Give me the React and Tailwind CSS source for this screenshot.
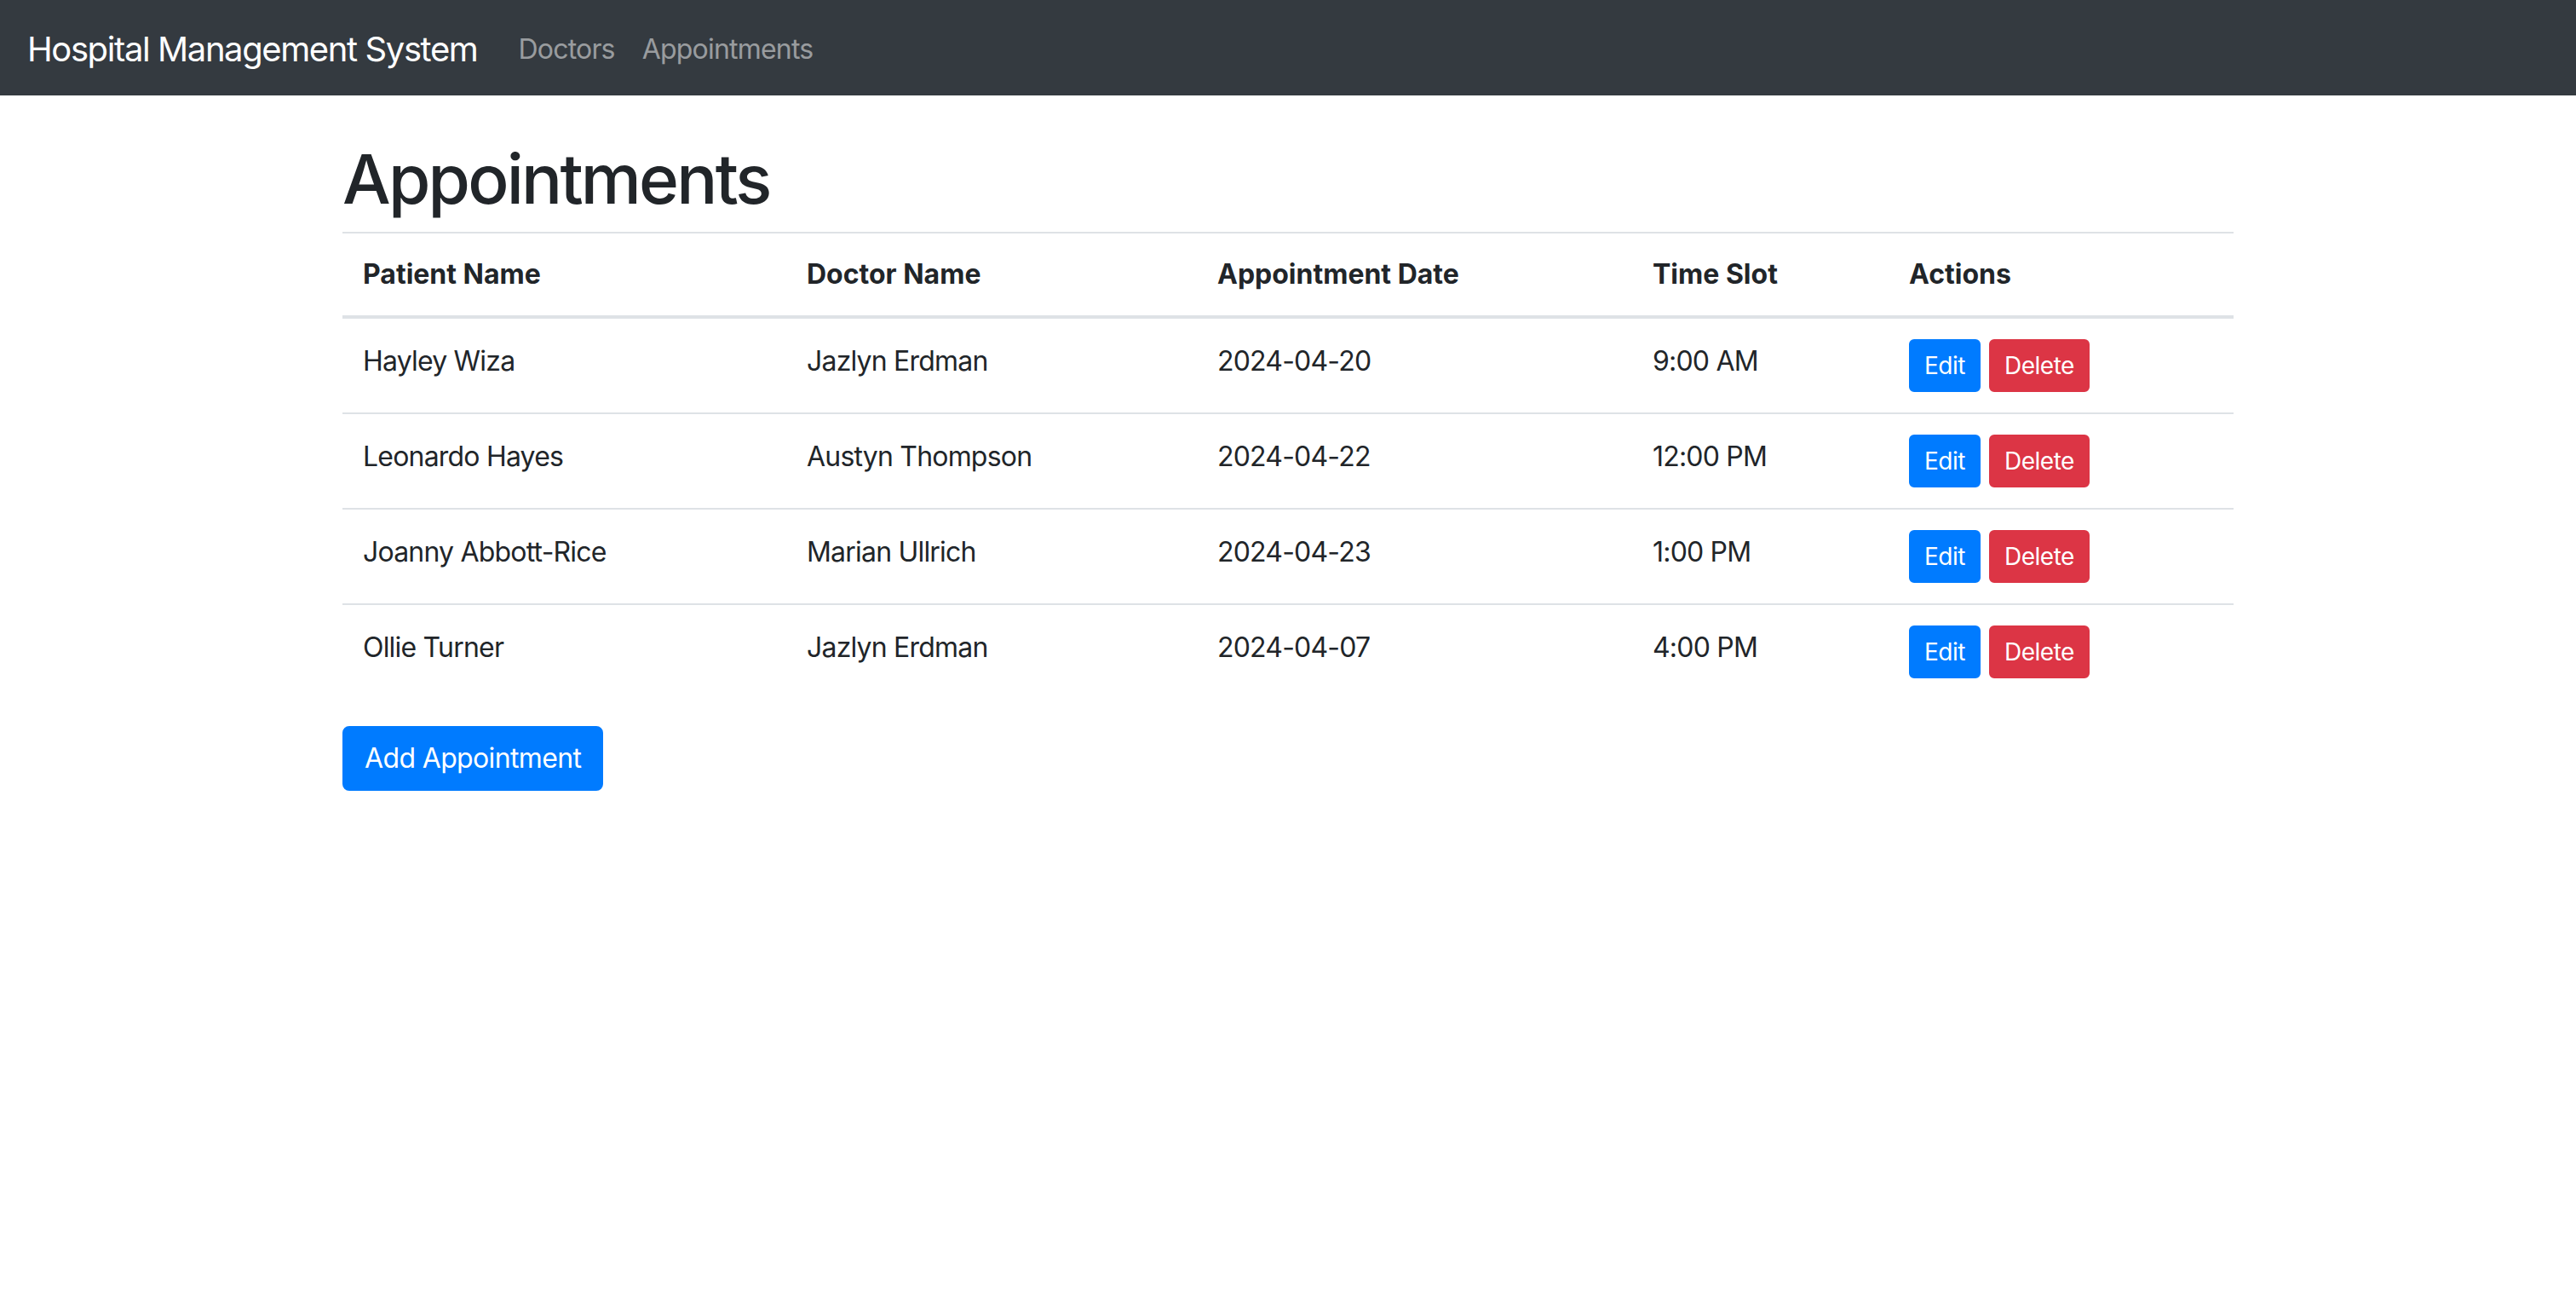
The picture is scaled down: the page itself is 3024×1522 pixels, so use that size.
import React from "react";

const appointments = [
  { patient: "Hayley Wiza", doctor: "Jazlyn Erdman", date: "2024-04-20", time: "9:00 AM" },
  { patient: "Leonardo Hayes", doctor: "Austyn Thompson", date: "2024-04-22", time: "12:00 PM" },
  { patient: "Joanny Abbott-Rice", doctor: "Marian Ullrich", date: "2024-04-23", time: "1:00 PM" },
  { patient: "Ollie Turner", doctor: "Jazlyn Erdman", date: "2024-04-07", time: "4:00 PM" },
];

const Navbar = () => (
  <nav className="flex items-center bg-[#343a40] px-[32px] pt-[18px] pb-[14px]">
    <a href="#" className="mr-[32px] py-[10px] text-[40px] leading-[60px] tracking-[-0.035em] text-white">
      Hospital Management System
    </a>
    <a href="#" className="px-[16px] py-[6px] text-[32px] leading-[48px] tracking-[-0.025em] text-white/50">
      Doctors
    </a>
    <a href="#" className="px-[16px] py-[6px] text-[32px] leading-[48px] tracking-[-0.025em] text-white/50">
      Appointments
    </a>
  </nav>
);

const App = () => {
  return (
    <div className="min-h-screen bg-white font-['Inter','Noto_Sans',sans-serif] text-[#212529]">
      <Navbar />
      <div className="mx-auto mt-[48px] w-[2280px] px-[30px]">
        <h1 className="mb-[16px] pt-[4px] text-[80px] font-medium leading-[92px] tracking-[-0.035em]">
          Appointments
        </h1>

        <table className="mb-[32px] w-full text-[32px] leading-[48px] tracking-[-0.025em]">
          <thead>
            <tr>
              <th className="w-[521px] border-t-2 border-b-4 border-[#dee2e6] p-[24px] text-left align-bottom font-bold tracking-normal">
                Patient Name
              </th>
              <th className="w-[482px] border-t-2 border-b-4 border-[#dee2e6] p-[24px] text-left align-bottom font-bold tracking-normal">
                Doctor Name
              </th>
              <th className="w-[511px] border-t-2 border-b-4 border-[#dee2e6] p-[24px] text-left align-bottom font-bold tracking-normal">
                Appointment Date
              </th>
              <th className="w-[301px] border-t-2 border-b-4 border-[#dee2e6] p-[24px] text-left align-bottom font-bold tracking-normal">
                Time Slot
              </th>
              <th className="border-t-2 border-b-4 border-[#dee2e6] p-[24px] text-left align-bottom font-bold tracking-normal">
                Actions
              </th>
            </tr>
          </thead>
          <tbody>
            {appointments.map((a) => (
              <tr key={a.patient}>
                <td className="border-t-2 border-[#dee2e6] px-[24px] pt-[26px] pb-[22px] align-top">{a.patient}</td>
                <td className="border-t-2 border-[#dee2e6] px-[24px] pt-[26px] pb-[22px] align-top">{a.doctor}</td>
                <td className="border-t-2 border-[#dee2e6] px-[24px] pt-[26px] pb-[22px] align-top">{a.date}</td>
                <td className="border-t-2 border-[#dee2e6] px-[24px] pt-[26px] pb-[22px] align-top">{a.time}</td>
                <td className="border-t-2 border-[#dee2e6] p-[24px] align-top">
                  <div className="flex tracking-[-0.015em]">
                    <button className="rounded-[6px] border-2 border-[#007bff] bg-[#007bff] px-[16px] py-[8px] text-[28px] leading-[42px] text-white">
                      Edit
                    </button>
                    <button className="ml-[10px] rounded-[6px] border-2 border-[#dc3545] bg-[#dc3545] px-[16px] py-[8px] text-[28px] leading-[42px] text-white">
                      Delete
                    </button>
                  </div>
                </td>
              </tr>
            ))}
          </tbody>
        </table>

        <button className="rounded-[8px] border-2 border-[#007bff] bg-[#007bff] px-[24px] py-[12px] text-[32px] leading-[48px] tracking-[-0.02em] text-white">
          Add Appointment
        </button>
      </div>
    </div>
  );
};

export default App;
